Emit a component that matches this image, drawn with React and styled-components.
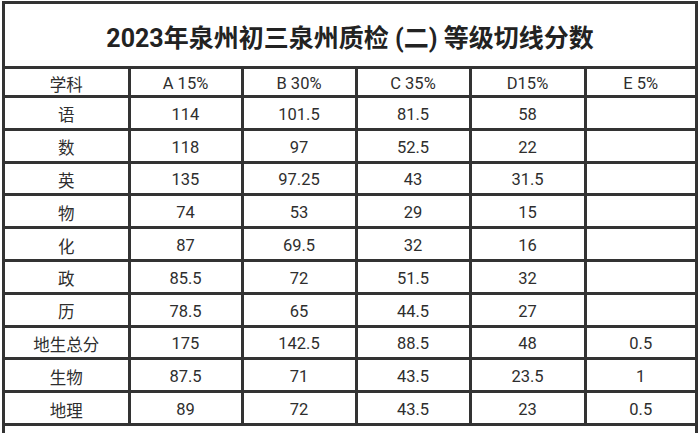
import React from "react";
import styled, { createGlobalStyle } from "styled-components";

const GlobalStyle = createGlobalStyle`
    html, body {
        margin: 0;
        padding: 0;
        background: #ffffff;
        overflow: hidden;
    }
    body {
        font-family: Roboto, "Noto Sans CJK SC", sans-serif;
    }
`

const header = ['学科', 'A 15%', 'B 30%', 'C 35%', 'D15%', 'E 5%']

const rows = [
    ['语', '114', '101.5', '81.5', '58', ''],
    ['数', '118', '97', '52.5', '22', ''],
    ['英', '135', '97.25', '43', '31.5', ''],
    ['物', '74', '53', '29', '15', ''],
    ['化', '87', '69.5', '32', '16', ''],
    ['政', '85.5', '72', '51.5', '32', ''],
    ['历', '78.5', '65', '44.5', '27', ''],
    ['地生总分', '175', '142.5', '88.5', '48', '0.5'],
    ['生物', '87.5', '71', '43.5', '23.5', '1'],
    ['地理', '89', '72', '43.5', '23', '0.5'],
]

function App() {
    return (
        <>
            <GlobalStyle />
            <Frame>
                <Title>2023年泉州初三泉州质检 (二) 等级切线分数</Title>
                <Grid>
                    {header.map((elem, idx) => (
                        <Cell key={'h' + idx}>{elem}</Cell>
                    ))}
                    {rows.map((row, r) =>
                        row.map((elem, c) => (
                            <Cell key={r + '-' + c}>{elem}</Cell>
                        ))
                    )}
                </Grid>
            </Frame>
        </>
    )
}

export default App

const Frame = styled.div`
    box-sizing: border-box;
    width: 696px;
    height: 432px;
    margin: 1px 0 0 2px;

    border: 3px solid #333333;
    border-bottom: none;
    background: #ffffff;
`

const Title = styled.div`
    height: 65px;

    display: flex;
    align-items: center;
    justify-content: center;
    padding-top: 2px;
    box-sizing: border-box;

    font-size: 25px;
    font-weight: 700;
    color: #222222;

    border-bottom: 3px solid #333333;
`

const Grid = styled.div`
    display: grid;
    grid-template-columns: 122.5px 110px 111px 111px 112px 1fr;
    grid-template-rows: 26px;
    grid-auto-rows: 29.8px;
    gap: 3px;

    background: #333333;
    border-bottom: 3px solid #333333;
`

const Cell = styled.div`
    background: #ffffff;

    display: flex;
    align-items: center;
    justify-content: center;
    padding-top: 3px;
    box-sizing: border-box;

    font-size: 16.5px;
    color: #2e2e2e;
    white-space: nowrap;
`
